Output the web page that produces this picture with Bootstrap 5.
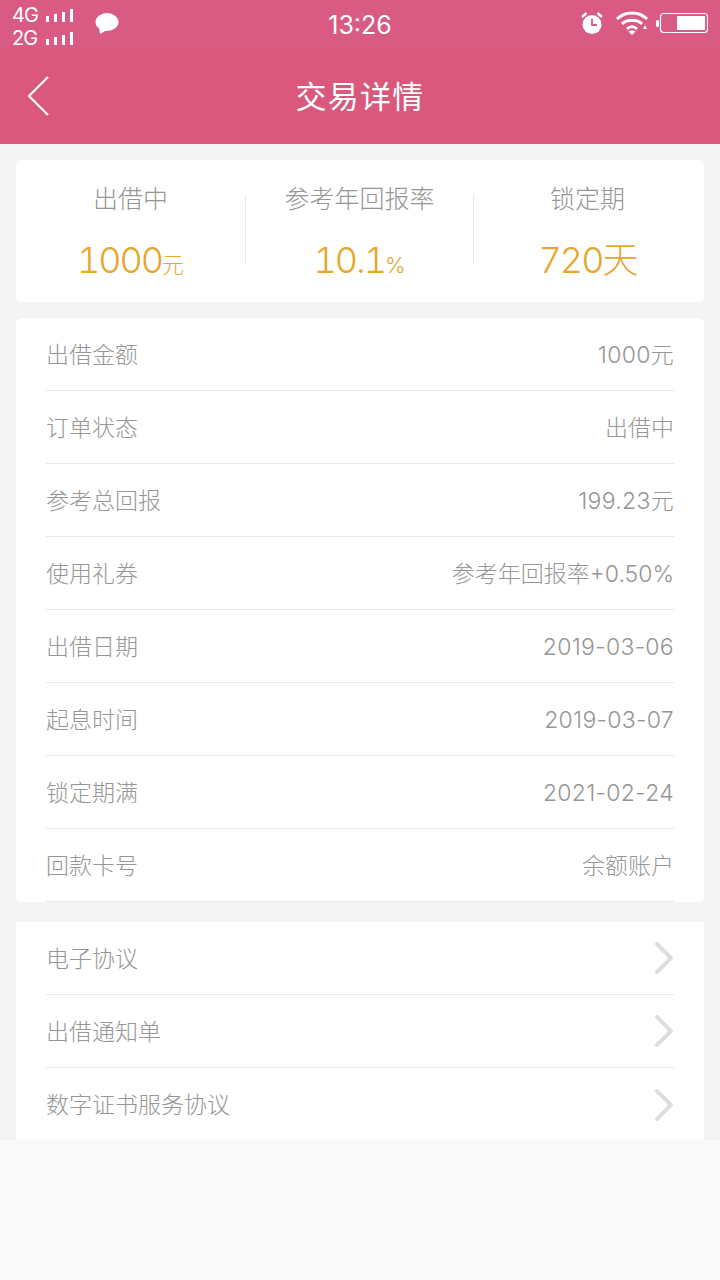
<!DOCTYPE html><html lang="zh-CN">
<head>
  <meta charset="UTF-8">
  <title>交易详情</title>
  <meta name="viewport" content="width=device-width, initial-scale=1">
  <link href="https://cdn.jsdelivr.net/npm/bootstrap@5.3.2/dist/css/bootstrap.min.css" rel="stylesheet">
  <style>
    html, body {
      height: 100%;
    }
    body {
      width: 720px;
      height: 1280px;
      overflow: hidden;
      background-color: #fafafa;
      font-family: Inter, "Noto Sans CJK SC", sans-serif;
      color: #969696;
    }
    .phone-status {
      height: 48px;
      padding: 6px 12px 0;
      background-color: #d95b83;
      color: #fff;
    }
    .net-label {
      font-size: 20px;
      line-height: 23px;
      letter-spacing: -1px;
      width: 33px;
    }
    .net-row {
      height: 23px;
    }
    .bubble-icon {
      margin-left: 20px;
    }
    .status-time {
      font-size: 25px;
      line-height: 51px;
      left: 0;
      right: 0;
      top: 0;
    }
    .wifi-icon {
      margin-left: 11px;
    }
    .batt-icon {
      margin-left: 7px;
    }
    .title-bar {
      height: 96px;
      background-color: #da587c;
      color: #fff;
    }
    .title-text {
      font-size: 31px;
      font-weight: 400;
      letter-spacing: 1.2px;
      line-height: 98px;
    }
    .back-icon {
      left: 26px;
      top: 28px;
    }
    .page-body {
      height: 996px;
      padding: 16px 16px 0;
      background-color: #f4f4f4;
    }
    .white-panel {
      background-color: #fff;
      border-radius: 6px;
    }
    .summary-panel {
      height: 142px;
      margin-bottom: 16px;
    }
    .summary-col {
      width: 228px;
    }
    .summary-col:first-child {
      width: 229px;
    }
    .summary-col + .summary-col {
      border-left: 1px solid #e6e6e6;
    }
    .summary-cell {
      height: 70px;
      margin-top: 35px;
    }
    .summary-name {
      font-size: 25px;
      line-height: 32px;
      font-weight: 300;
      margin-top: -12px;
      white-space: nowrap;
    }
    .summary-num {
      font-size: 36px;
      line-height: 44px;
      font-weight: 300;
      font-variant-numeric: tabular-nums;
      letter-spacing: -2px;
      color: #e6a72c;
      margin-top: 23px;
      white-space: nowrap;
    }
    .summary-unit {
      font-size: 22px;
      letter-spacing: 0;
    }
    .detail-panel {
      height: 584px;
      padding: 0 30px;
      margin-bottom: 20px;
    }
    .info-row {
      height: 73px;
      padding-top: 2px;
      border-bottom: 1px solid #e8e8e8;
      font-size: 23px;
      font-weight: 300;
    }
    .num-val {
      letter-spacing: .3px;
    }
    .link-panel {
      height: 218px;
      padding: 0 30px;
      border-radius: 0;
    }
    .link-row {
      height: 73px;
      padding-top: 2px;
      border-bottom: 1px solid #e8e8e8;
      font-size: 23px;
      font-weight: 300;
    }
    .link-row svg {
      margin-top: -2px;
    }
    .link-row:last-child {
      border-bottom: 0;
    }
    .page-foot {
      height: 140px;
      margin: 0 -16px;
      background-color: #fafafa;
    }
  </style>
</head>
<body>
<div class="phone-status position-relative d-flex align-items-center">
  <div>
    <div class="net-row d-flex align-items-center">
      <span class="net-label">4G</span>
      <svg width="30" height="14" viewBox="0 0 30 14" fill="#fff"><rect x="1" y="7" width="3" height="6"/><rect x="9" y="5" width="3" height="8"/><rect x="17" y="3" width="3" height="10"/><rect x="25" y="0" width="3" height="13"/></svg>
    </div>
    <div class="net-row d-flex align-items-center">
      <span class="net-label">2G</span>
      <svg width="30" height="14" viewBox="0 0 30 14" fill="#fff"><rect x="1" y="7" width="3" height="6"/><rect x="9" y="5" width="3" height="8"/><rect x="17" y="3" width="3" height="10"/><rect x="25" y="0" width="3" height="13"/></svg>
    </div>
  </div>
  <svg class="bubble-icon mb-2" width="24" height="22" viewBox="0 0 24 22" fill="#fff"><ellipse cx="12" cy="10" rx="11.5" ry="9"/><path d="M4 15 L5 22 L12 18 Z"/></svg>
  <div class="status-time position-absolute text-center">13:26</div>
  <div class="ms-auto d-flex align-items-center mb-2">
    <svg width="24" height="24" viewBox="0 0 24 24" fill="none"><circle cx="12" cy="13.5" r="9.5" fill="#fff"/><path d="M12 7.5V14H17" stroke="#d95b83" stroke-width="1.8"/><path d="M2 6 L6.5 2 M22 6 L17.5 2" stroke="#fff" stroke-width="2.6"/></svg>
    <svg class="wifi-icon" width="34" height="24" viewBox="0 0 34 24" fill="none" stroke="#fff" stroke-width="3"><path d="M2 8 C10 0 24 0 32 8"/><path d="M7 13 C12 8 22 8 27 13"/><path d="M12 18 C15 15 19 15 22 18"/><path d="M17 24 L13.5 20.5 C15.5 19 18.5 19 20.5 20.5 Z" fill="#fff" stroke="none"/><path d="M28 18 L32 18 L30 14 Z" fill="#fff" stroke="none"/></svg>
    <svg class="batt-icon" width="52" height="22" viewBox="0 0 52 22" fill="none"><rect x="0" y="8" width="3" height="7" rx="1.5" fill="#fff"/><rect x="4.5" y="1.5" width="47" height="19" rx="3" stroke="#fff" stroke-width="1.2"/><rect x="21" y="4" width="28" height="14" fill="#fff"/></svg>
  </div>
</div>

<div class="title-bar position-relative text-center">
  <svg class="back-icon position-absolute" width="26" height="40" viewBox="0 0 26 40" fill="none" stroke="#fff" stroke-width="2.2"><path d="M22 1 L3 20 L22 39"/></svg>
  <div class="title-text">交易详情</div>
</div>

<div class="page-body">
  <div class="white-panel summary-panel d-flex">
    <div class="summary-col summary-cell text-center">
      <div class="summary-name">出借中</div>
      <div class="summary-num">1000<span class="summary-unit">元</span></div>
    </div>
    <div class="summary-col summary-cell text-center">
      <div class="summary-name">参考年回报率</div>
      <div class="summary-num">10.1<span class="summary-unit">%</span></div>
    </div>
    <div class="summary-col summary-cell text-center">
      <div class="summary-name">锁定期</div>
      <div class="summary-num">720天</div>
    </div>
  </div>

  <div class="white-panel detail-panel">
    <div class="info-row d-flex justify-content-between align-items-center"><span>出借金额</span><span class="num-val">1000元</span></div>
    <div class="info-row d-flex justify-content-between align-items-center"><span>订单状态</span><span>出借中</span></div>
    <div class="info-row d-flex justify-content-between align-items-center"><span>参考总回报</span><span class="num-val">199.23元</span></div>
    <div class="info-row d-flex justify-content-between align-items-center"><span>使用礼券</span><span>参考年回报率+0.50%</span></div>
    <div class="info-row d-flex justify-content-between align-items-center"><span>出借日期</span><span class="num-val">2019-03-06</span></div>
    <div class="info-row d-flex justify-content-between align-items-center"><span>起息时间</span><span class="num-val">2019-03-07</span></div>
    <div class="info-row d-flex justify-content-between align-items-center"><span>锁定期满</span><span class="num-val">2021-02-24</span></div>
    <div class="info-row d-flex justify-content-between align-items-center"><span>回款卡号</span><span>余额账户</span></div>
  </div>

  <div class="white-panel link-panel">
    <div class="link-row d-flex justify-content-between align-items-center"><span>电子协议</span>
      <svg width="20" height="32" viewBox="0 0 20 32" fill="none" stroke="#ddd" stroke-width="4" stroke-linecap="round" stroke-linejoin="round"><path d="M3 2 L17 16 L3 30"/></svg></div>
    <div class="link-row d-flex justify-content-between align-items-center"><span>出借通知单</span>
      <svg width="20" height="32" viewBox="0 0 20 32" fill="none" stroke="#ddd" stroke-width="4" stroke-linecap="round" stroke-linejoin="round"><path d="M3 2 L17 16 L3 30"/></svg></div>
    <div class="link-row d-flex justify-content-between align-items-center"><span>数字证书服务协议</span>
      <svg width="20" height="32" viewBox="0 0 20 32" fill="none" stroke="#ddd" stroke-width="4" stroke-linecap="round" stroke-linejoin="round"><path d="M3 2 L17 16 L3 30"/></svg></div>
  </div>
  <div class="page-foot"></div>
</div>

<script src="https://cdn.jsdelivr.net/npm/bootstrap@5.3.2/dist/js/bootstrap.bundle.min.js"></script>
</body>
</html>
